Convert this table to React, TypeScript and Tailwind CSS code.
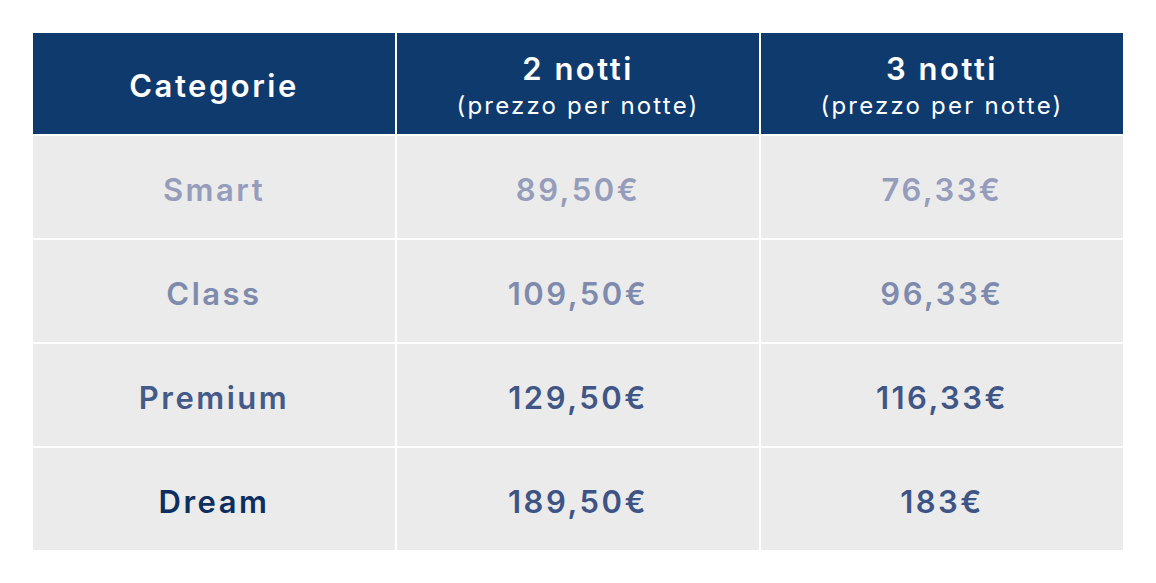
import React from 'react';

type Row = {
  name: string;
  two: string;
  three: string;
  nameColor: string;
  priceColor: string;
};

const rows: Row[] = [
  { name: 'Smart', two: '89,50€', three: '76,33€', nameColor: 'text-[#959dbb]', priceColor: 'text-[#959dbb]' },
  { name: 'Class', two: '109,50€', three: '96,33€', nameColor: 'text-[#7e8bae]', priceColor: 'text-[#7e8bae]' },
  { name: 'Premium', two: '129,50€', three: '116,33€', nameColor: 'text-[#445a88]', priceColor: 'text-[#3f5686]' },
  { name: 'Dream', two: '189,50€', three: '183€', nameColor: 'text-[#0d2f5f]', priceColor: 'text-[#3d5485]' },
];

export default function App() {
  return (
    <div className="min-h-[583px] w-[1156px] bg-white pl-[33px] pt-[33px] font-['Inter','Liberation_Sans',sans-serif]">
      <div className="grid w-[1090px] grid-cols-3 gap-[2px]">
        {/* header */}
        <div className="flex h-[101px] items-center justify-center bg-[#0f3a6e] pt-[6px] text-[31px] font-semibold tracking-[2.5px] text-white">
          Categorie
        </div>
        {['2 notti', '3 notti'].map((h) => (
          <div
            key={h}
            className="flex h-[101px] flex-col items-center justify-center bg-[#0f3a6e] pt-[4px] text-white"
          >
            <span className="text-[31px] font-semibold leading-[36px] tracking-[2.5px]">{h}</span>
            <span className="mt-[4px] text-[24px] font-normal leading-[30px] tracking-[2.2px]">(prezzo per notte)</span>
          </div>
        ))}

        {/* righe */}
        {rows.map((r) => (
          <React.Fragment key={r.name}>
            <div className={`flex h-[102px] items-center justify-center bg-[#ebebeb] pt-[6px] text-[31px] font-semibold tracking-[2.5px] ${r.nameColor}`}>
              {r.name}
            </div>
            <div className={`flex h-[102px] items-center justify-center bg-[#ebebeb] pt-[6px] text-[31px] font-semibold tracking-[2.5px] ${r.priceColor}`}>
              {r.two}
            </div>
            <div className={`flex h-[102px] items-center justify-center bg-[#ebebeb] pt-[6px] text-[31px] font-semibold tracking-[2.5px] ${r.priceColor}`}>
              {r.three}
            </div>
          </React.Fragment>
        ))}
      </div>
    </div>
  );
}
